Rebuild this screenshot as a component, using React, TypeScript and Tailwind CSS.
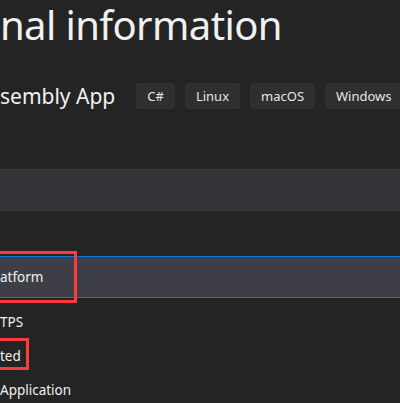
import React from 'react';

const tags = ['C#', 'Linux', 'macOS', 'Windows'];

const font = { fontFamily: '"Noto Sans", "Open Sans", sans-serif' };

export default function App() {
  return (
    <div
      className="relative w-[400px] h-[403px] overflow-hidden bg-[#242424] text-[#f1f1f1]"
      style={font}
    >
      {/* heading */}
      <div className="h-[56px] text-[40px] leading-[56px] tracking-[-0.6px] whitespace-nowrap -mt-[3px]">
        nal information
      </div>

      {/* project type + tags */}
      <div className="mt-[30px] flex h-[26px] items-center whitespace-nowrap">
        <span className="text-[21px] leading-[26px]">sembly App</span>
        <div className="ml-[21px] flex gap-[10px]">
          {tags.map((t) => (
            <span
              key={t}
              className="h-[26px] rounded-[4px] bg-[#2f2f2f] px-[11px] text-[13px] leading-[26px] text-[#e6e6e6]"
            >
              {t}
            </span>
          ))}
        </div>
      </div>

      {/* empty band */}
      <div className="mt-[60px] h-[42px] border-y border-[#3d3d40] bg-[#333337]" />

      {/* selected row */}
      <div className="mt-[45px] flex h-[42px] items-center border-y border-[#0a78d7] bg-[#3e3f46] text-[13.5px]">
        atform
      </div>

      {/* list rows */}
      <div className="mt-[7px] flex flex-col text-[13.5px]">
        <div className="flex h-[34px] items-center">TPS</div>
        <div className="flex h-[34px] items-center">ted</div>
        <div className="flex h-[34px] items-center">Application</div>
      </div>

      {/* annotation boxes */}
      <div className="absolute left-[-4px] top-[251px] h-[52px] w-[81px] border-[3px] border-[#ff3b3b]" />
      <div className="absolute left-[-4px] top-[338px] h-[32px] w-[33px] border-[3px] border-[#ff3b3b]" />
    </div>
  );
}
